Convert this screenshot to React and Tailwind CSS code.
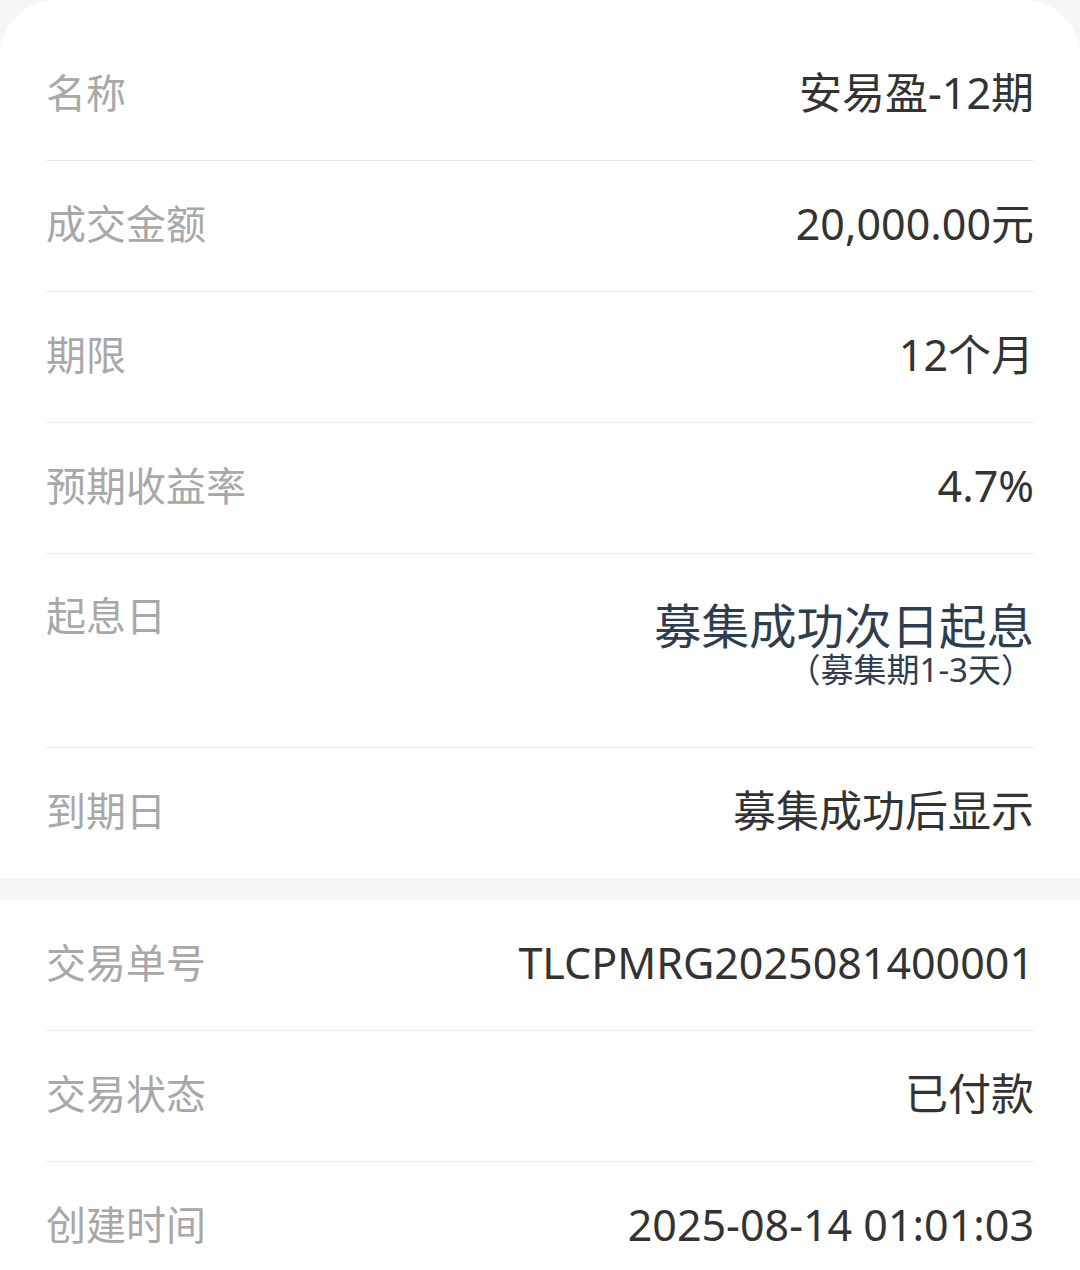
const font = { fontFamily: '"Noto Sans", "Noto Sans CJK SC", sans-serif' };

const topRows = [
  { label: "名称", value: "安易盈-12期" },
  { label: "成交金额", value: "20,000.00元" },
  { label: "期限", value: "12个月" },
  { label: "预期收益率", value: "4.7%" },
];

const orderRows = [
  { label: "交易单号", value: "TLCPMRG2025081400001" },
  { label: "交易状态", value: "已付款" },
  { label: "创建时间", value: "2025-08-14 01:01:03" },
];

function Row({ label, value, last }) {
  return (
    <div
      className={`flex items-center justify-between pb-[4px] ${
        last ? "h-[130px]" : "h-[131px] border-b border-[#ebebeb]"
      }`}
    >
      <span className="text-[40px] leading-[48px] text-[#a8a8a8]">{label}</span>
      <span className="text-[43px] leading-[52px] text-[#333333]">{value}</span>
    </div>
  );
}

export default function App() {
  return (
    <div className="min-h-[1270px] bg-[#f6f6f6]" style={font}>
      {/* Product info */}
      <div className="rounded-t-[56px] bg-white px-[46px] pt-[30px]">
        {topRows.map((row) => (
          <Row key={row.label} {...row} />
        ))}

        <div className="flex h-[194px] justify-between border-b border-[#ebebeb]">
          <div className="flex h-[124px] items-center">
            <span className="text-[40px] leading-[48px] text-[#a8a8a8]">起息日</span>
          </div>
          <div className="flex flex-col items-end pt-[46px]">
            <span className="text-[47.5px] leading-[52px] text-[#2c3e50]">募集成功次日起息</span>
            <span className="text-[33px] leading-[36px] text-[#2c3e50]">（募集期1-3天）</span>
          </div>
        </div>

        <Row label="到期日" value="募集成功后显示" last />
      </div>

      <div className="h-[22px]" />

      {/* Order info */}
      <div className="bg-white px-[46px]">
        {orderRows.map((row, i) => (
          <Row key={row.label} {...row} last={i === orderRows.length - 1} />
        ))}
      </div>
    </div>
  );
}
